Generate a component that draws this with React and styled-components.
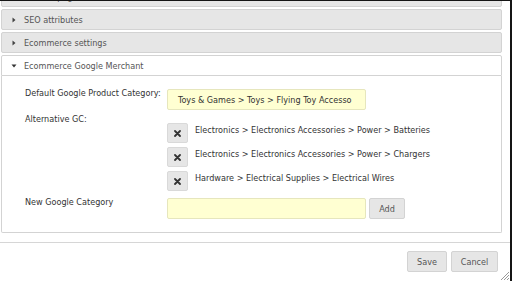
import React, { useEffect, useRef } from "react";
import styled, { createGlobalStyle } from "styled-components";

const Global = createGlobalStyle`
  html, body { margin: 0; padding: 0; background: #151515; overflow: hidden; }
  * { box-sizing: border-box; }
  body { font-family: "DejaVu Sans Condensed", "Liberation Sans", sans-serif; font-size: 9px; }
`;

const Dialog = styled.div`
  position: relative;
  width: 510px;
  height: 280px;
  margin-top: 1px;
  background: #fff;
  display: flex;
  flex-direction: column;
`;

const ScrollArea = styled.div`
  height: 241px;
  overflow: hidden;
  padding: 0 8px 20px 1px;
`;

const Header = styled.div`
  display: flex;
  align-items: center;
  height: 21px;
  margin-top: 2px;
  padding-left: 9px;
  gap: 7px;
  border: 1px solid #d3d3d3;
  border-radius: ${(p) => (p.$active ? "2px 2px 0 0" : "2px")};
  background: ${(p) => (p.$active ? "#fff" : "#e6e6e6")};
  color: #555;
  line-height: 12px;
  white-space: nowrap;
`;

const ArrowBox = styled.span`
  width: 6px;
  height: 6px;
  display: flex;
  align-items: center;
  justify-content: center;
`;

const Panel = styled.div`
  border: 1px solid #d3d3d3;
  border-top: 0;
  border-radius: 0 0 2px 2px;
  padding: 13px 0 13px 23px;
  display: flex;
  flex-direction: column;
  gap: 5px;
  color: #333;
`;

const Row = styled.div`
  display: flex;
  align-items: flex-start;
  margin-top: ${(p) => p.$top || 0}px;
`;

const Label = styled.div`
  width: 142px;
  line-height: 12px;
  margin-top: -2px;
  white-space: nowrap;
`;

const YellowInput = styled.div`
  width: 199px;
  height: 21px;
  background: #ffffd2;
  border: 1px solid #e6e6bd;
  border-radius: 2px;
  padding-left: 10px;
  display: flex;
  align-items: center;
  color: #333;
  line-height: 12px;
  white-space: nowrap;
  overflow: hidden;
`;

const List = styled.div`
  display: flex;
  flex-direction: column;
  gap: 4px;
  margin-top: 8px;
`;

const Item = styled.div`
  display: flex;
  align-items: flex-start;
  gap: 7px;
`;

const RemoveBtn = styled.div`
  width: 21px;
  height: 20px;
  background: #e6e6e6;
  border: 1px solid #d9d9d9;
  border-radius: 2px;
  display: flex;
  align-items: center;
  justify-content: center;
  margin-top: ${(p) => p.$offset || 0}px;
`;

const ItemText = styled.div`
  line-height: 12px;
  padding-top: 1px;
  white-space: nowrap;
`;

const Button = styled.div`
  height: 21px;
  width: ${(p) => p.$w}px;
  background: #e6e6e6;
  border: 1px solid #d3d3d3;
  border-radius: 2px;
  color: #555;
  display: flex;
  align-items: center;
  justify-content: center;
  line-height: 12px;
  margin-left: ${(p) => p.$ml || 0}px;
`;

const ButtonPane = styled.div`
  flex: 1;
  border-top: 1px solid #d6d6d6;
  display: flex;
  justify-content: flex-end;
  align-items: flex-start;
  gap: 4px;
  padding: 8px 12px 0 0;
`;

const Grip = styled.svg`
  position: absolute;
  right: 0;
  bottom: 0;
`;

const Arrow = ({ down }) => (
  <ArrowBox>
    <svg width="6" height="6" viewBox="0 0 6 6">
      {down ? (
        <polygon points="0.5,1.5 5.5,1.5 3,4.5" fill="#333" />
      ) : (
        <polygon points="1.5,0.5 4.5,3 1.5,5.5" fill="#444" />
      )}
    </svg>
  </ArrowBox>
);

const XIcon = () => (
  <svg width="7" height="7" viewBox="0 0 7 7">
    <path d="M1 1 L6 6 M6 1 L1 6" stroke="#333" strokeWidth="1.8" strokeLinecap="round" />
  </svg>
);

const alternatives = [
  "Electronics > Electronics Accessories > Power > Batteries",
  "Electronics > Electronics Accessories > Power > Chargers",
  "Hardware > Electrical Supplies > Electrical Wires",
];

export default function App() {
  const ref = useRef(null);
  useEffect(() => {
    if (ref.current) ref.current.scrollTop = 17;
  }, []);
  return (
    <>
      <Global />
      <Dialog>
        <ScrollArea ref={ref}>
          <Header>
            <Arrow />
            Product page
          </Header>
          <Header>
            <Arrow />
            SEO attributes
          </Header>
          <Header>
            <Arrow />
            Ecommerce settings
          </Header>
          <Header $active>
            <Arrow down />
            Ecommerce Google Merchant
          </Header>
          <Panel>
            <Row>
              <Label>Default Google Product Category:</Label>
              <YellowInput>Toys &amp; Games &gt; Toys &gt; Flying Toy Accesso</YellowInput>
            </Row>
            <Row>
              <Label>Alternative GC:</Label>
              <List>
                {alternatives.map((a) => (
                  <Item key={a}>
                    <RemoveBtn>
                      <XIcon />
                    </RemoveBtn>
                    <ItemText>{a}</ItemText>
                  </Item>
                ))}
              </List>
            </Row>
            <Row $top={2}>
              <Label>New Google Category</Label>
              <YellowInput />
              <Button $w={36} $ml={3}>Add</Button>
            </Row>
          </Panel>
        </ScrollArea>
        <ButtonPane>
          <Button $w={40}>Save</Button>
          <Button $w={47}>Cancel</Button>
        </ButtonPane>
        <Grip width="11" height="11" viewBox="0 0 11 11">
          <path d="M10 2 L2 10 M10 5 L5 10 M10 8 L8 10" stroke="#999" strokeWidth="1" />
        </Grip>
      </Dialog>
    </>
  );
}
